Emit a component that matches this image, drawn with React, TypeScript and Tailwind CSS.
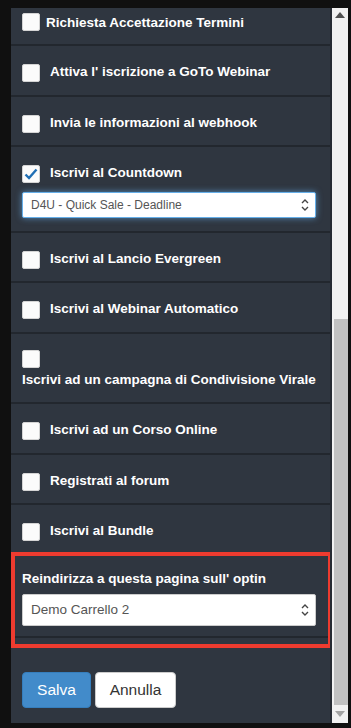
import { ReactNode } from "react";

const rows = [
  "Attiva l' iscrizione a GoTo Webinar",
  "Invia le informazioni al webhook",
];

function Box({ checked = false }: { checked?: boolean }) {
  return (
    <span className="flex h-[18px] w-[18px] shrink-0 items-center justify-center rounded-[2px] border border-[#d4d4d4] bg-[#fbfbfb]">
      {checked && (
        <svg width="14" height="12" viewBox="0 0 14 12">
          <path d="M1.5 6.5 L5 10 L12.5 1.5" fill="none" stroke="#1f6fb5" strokeWidth="2.4" />
        </svg>
      )}
    </span>
  );
}

function Carets() {
  return (
    <svg width="8" height="14" viewBox="0 0 8 14" className="shrink-0">
      <path d="M1 5 L4 2 L7 5" fill="none" stroke="#444" strokeWidth="1.4" />
      <path d="M1 9 L4 12 L7 9" fill="none" stroke="#444" strokeWidth="1.4" />
    </svg>
  );
}

function Row({ children, last = false }: { children: ReactNode; last?: boolean }) {
  return (
    <div className={`px-[11px] ${last ? "" : "border-b-2 border-[#22272e]"}`}>{children}</div>
  );
}

function CheckRow({ label, checked = false }: { label: string; checked?: boolean }) {
  return (
    <Row>
      <div className="flex h-[48.5px] items-start gap-[10px] pt-[18px]">
        <Box checked={checked} />
        <span className="mt-[-1px] text-[13.5px] font-bold leading-[18px] text-white">{label}</span>
      </div>
    </Row>
  );
}

export default function App() {
  return (
    <div
      className="flex h-[728px] w-[351px] bg-[#101010] pl-[11px] pt-[8px] pb-[5px] pr-[3px]"
      style={{ fontFamily: '"Liberation Sans", Arial, sans-serif' }}
    >
      {/* panel */}
      <div className="flex w-[321px] flex-col overflow-hidden border-r-2 border-[#262b33] bg-[#2f3640]">
        <Row>
          <div className="flex h-[36px] items-start gap-[6px] pt-[5px]">
            <Box />
            <span className="mt-[1px] text-[13.5px] font-bold leading-[18px] text-white">
              Richiesta Accettazione Termini
            </span>
          </div>
        </Row>
        {rows.map((r) => (
          <CheckRow key={r} label={r} />
        ))}

        <Row>
          <div className="flex h-[83.5px] flex-col pt-[18px]">
            <div className="flex items-start gap-[10px]">
              <Box checked />
              <span className="mt-[-1px] text-[13.5px] font-bold leading-[18px] text-white">
                Iscrivi al Countdown
              </span>
            </div>
            <div className="mt-[9px] flex h-[26px] w-[294px] items-center justify-between rounded-[2px] border border-[#66afe9] bg-white pl-[8px] pr-[6px] shadow-[0_0_6px_rgba(102,175,233,0.7)]">
              <span className="text-[12px] text-[#555]">D4U - Quick Sale - Deadline</span>
              <Carets />
            </div>
          </div>
        </Row>

        <CheckRow label="Iscrivi al Lancio Evergreen" />
        <CheckRow label="Iscrivi al Webinar Automatico" />

        <Row>
          <div className="flex h-[68.5px] flex-col pt-[16px]">
            <Box />
            <span className="mt-[3px] text-[13.5px] font-bold leading-[18px] text-white">
              Iscrivi ad un campagna di Condivisione Virale
            </span>
          </div>
        </Row>

        <CheckRow label="Iscrivi ad un Corso Online" />
        <CheckRow label="Registrati al forum" />
        <Row last>
          <div className="flex h-[47px] items-start gap-[10px] pt-[18px]">
            <Box />
            <span className="mt-[-1px] text-[13.5px] font-bold leading-[18px] text-white">Iscrivi al Bundle</span>
          </div>
        </Row>

        {/* highlighted section */}
        <div className="mr-[-2px] border-4 border-[#ee3b2f]">
          <div className="border-b-2 border-[#22272e] px-[7px] pt-[14px]">
            <div className="text-[13.5px] font-bold leading-[18px] text-white">
              Reindirizza a questa pagina sull' optin
            </div>
            <div className="mb-[10px] mt-[6px] flex h-[32px] w-[294px] items-center justify-between rounded-[2px] border border-[#cccccc] bg-white pl-[8px] pr-[6px]">
              <span className="text-[13.5px] text-[#555]">Demo Carrello 2</span>
              <Carets />
            </div>
          </div>
          <div className="h-[6px]" />
        </div>

        <div className="flex gap-[4px] px-[11px] pt-[24px]">
          <button className="h-[36px] w-[69px] rounded-[4px] border border-[#357ebd] bg-[#428bca] text-[15.5px] text-white">
            Salva
          </button>
          <button className="h-[36px] w-[81px] rounded-[4px] border border-[#cccccc] bg-white text-[15.5px] text-[#333]">
            Annulla
          </button>
        </div>
      </div>

      {/* scrollbar */}
      <div className="flex w-[16px] flex-col bg-[#f1f1f1]">
        <div className="flex h-[14px] items-center justify-center">
          <svg width="10" height="6" viewBox="0 0 10 6">
            <path d="M0 6 L5 0 L10 6 Z" fill="#505050" />
          </svg>
        </div>
        <div className="h-[297px]" />
        <div className="ml-[2px] flex-1 bg-[#c1c1c1]" />
        <div className="flex h-[18px] items-center justify-center">
          <svg width="10" height="6" viewBox="0 0 10 6">
            <path d="M0 0 L5 6 L10 0 Z" fill="#a3a3a3" />
          </svg>
        </div>
      </div>
    </div>
  );
}
